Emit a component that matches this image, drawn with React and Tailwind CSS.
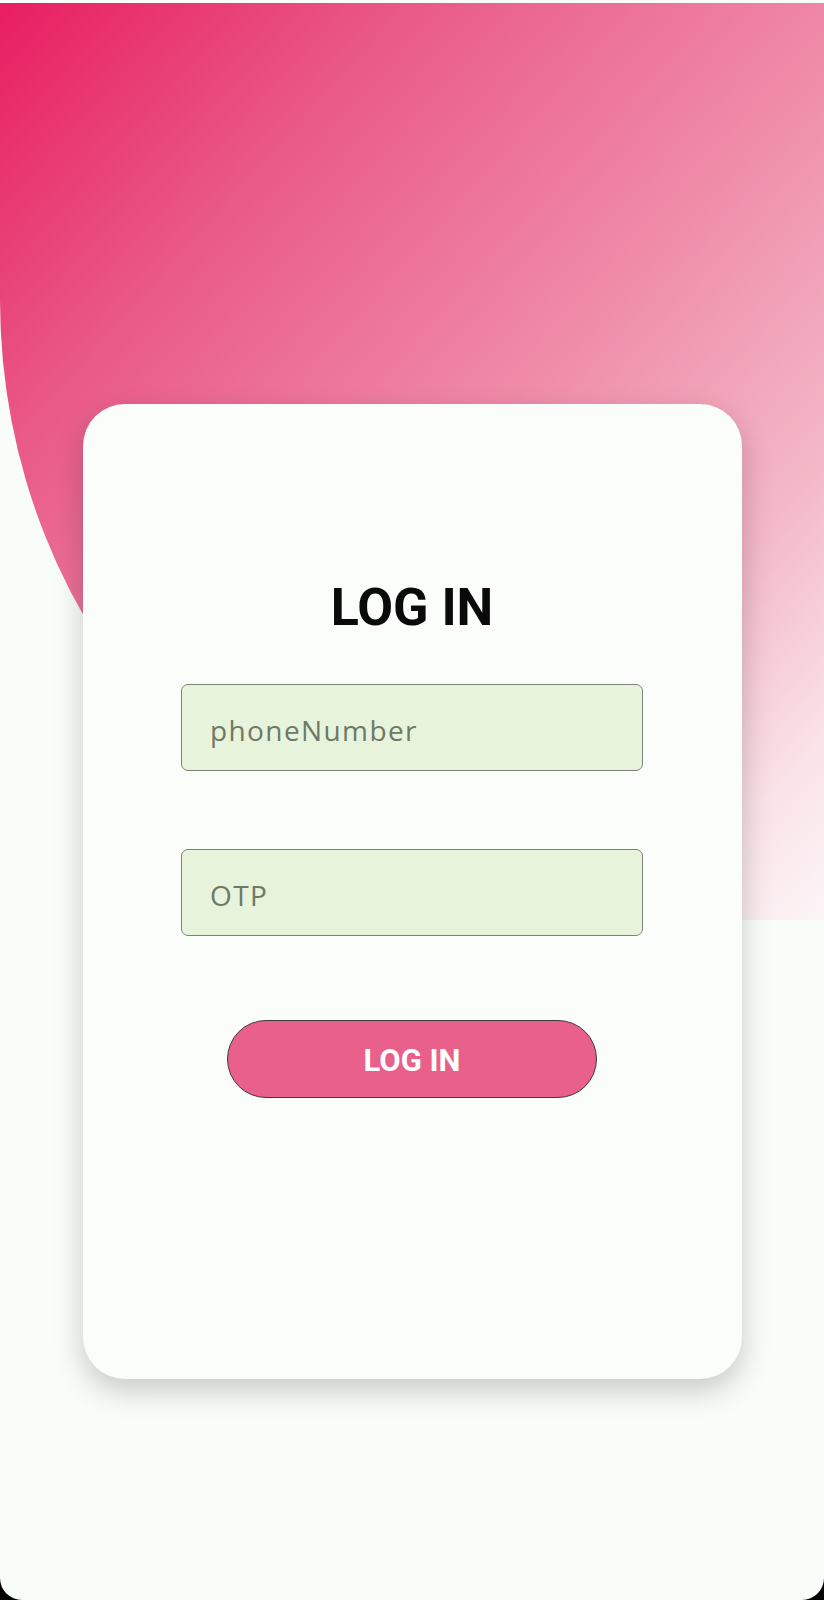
import React from "react";

export default function App() {
  return (
    <div className="w-[824px] h-[1600px] bg-black">
      <div className="relative w-full h-full bg-[#f9fdf9] rounded-b-[22px] overflow-hidden">
        <div className="absolute left-0 top-[3px] w-full h-[917px] rounded-bl-[600px_620px] bg-[linear-gradient(to_bottom_right,#e81e62_0%,#e95a86_25%,#ec7199_38%,#ef8aa7_52%,#f3b8c7_75%,#f9e2e8_90%,#fcf5f7_100%)]" />
        <div className="relative mx-auto pt-[404px] w-[659px]">
          <div className="w-[659px] h-[975px] rounded-[42px] bg-[#fbfdfb] shadow-[0_12px_30px_rgba(0,0,0,0.2)] flex flex-col items-center pt-[178px]">
            <h1
              className="text-[52px] leading-[52px] font-bold text-[#0a0a0a] text-center"
              style={{ fontFamily: "Roboto, 'Liberation Sans', sans-serif" }}
            >
              LOG IN
            </h1>
            <input
              type="text"
              placeholder="phoneNumber"
              className="mt-[50px] w-[462px] h-[87px] rounded-[7px] border-[1.5px] border-[#7d8279] bg-[#e8f3dc] pl-[28px] pt-[4px] text-[28px] tracking-[0.05em] text-[#4b5545] placeholder:text-[#6f7967] outline-none"
              style={{ fontFamily: "'Open Sans', sans-serif" }}
            />
            <input
              type="text"
              placeholder="OTP"
              className="mt-[78px] w-[462px] h-[87px] rounded-[7px] border-[1.5px] border-[#7d8279] bg-[#e8f3dc] pl-[28px] pt-[4px] text-[28px] tracking-[0.05em] text-[#4b5545] placeholder:text-[#6f7967] outline-none"
              style={{ fontFamily: "'Open Sans', sans-serif" }}
            />
            <button
              type="button"
              className="mt-[84px] w-[370px] h-[78px] rounded-full border-[1.5px] border-[#3b3b3b] bg-[#e9608a] text-white text-[31px] font-bold leading-none pt-[3px]"
              style={{ fontFamily: "Roboto, 'Liberation Sans', sans-serif" }}
            >
              LOG IN
            </button>
          </div>
        </div>
      </div>
    </div>
  );
}
